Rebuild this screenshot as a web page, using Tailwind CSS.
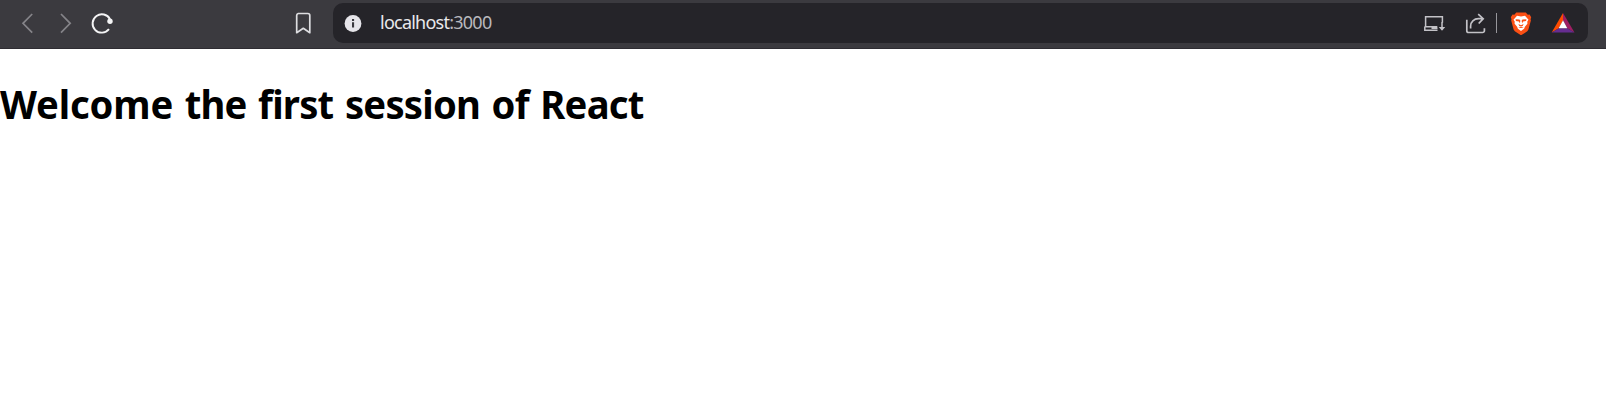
<!DOCTYPE html>
<html lang="en">
<head>
<meta charset="utf-8">
<title>localhost:3000</title>
<script src="https://cdn.jsdelivr.net/npm/@tailwindcss/browser@4"></script>
</head>
<body class="h-screen overflow-hidden bg-white font-['Noto_Sans',sans-serif]">
<header class="flex h-[49px] items-start border-b border-[#2e2c32] bg-[#3b3a3f] pt-[3px] pl-5 pr-[18px]">
  <nav class="flex h-10 w-[313px] shrink-0 items-center">
    <svg class="h-6 w-4" viewBox="0 0 16 24" fill="none" stroke="#858489" stroke-width="1.7"><path d="M12.2 3 3 12.3l9.200 9.400"/></svg>
    <svg class="ml-[22px] h-6 w-4" viewBox="0 0 16 24" fill="none" stroke="#858489" stroke-width="1.7"><path d="M3 3l9.200 9.300L3 21.700"/></svg>
    <svg class="ml-4 h-6 w-6" viewBox="0 0 24 24" fill="none" stroke="#f4f4f5" stroke-width="1.900"><path d="M20 8.300A9.200 9.200 0 1 0 19 18.200"/><circle cx="20" cy="10.300" r="2.700" fill="#f4f4f5" stroke="none"/></svg>
    <svg class="ml-[181px] h-6 w-4" viewBox="0 0 16 24" fill="none" stroke="#dddde0" stroke-width="1.700" stroke-linejoin="round"><path d="M3.200 2.500h9.600a2 2 0 0 1 2 2v17.200L8.300 17.300l-6.600 4.400V4.500a2 2 0 0 1 1.500-2z"/></svg>
  </nav>
  <div class="flex h-10 flex-1 items-center rounded-[10px] bg-[#252429] pl-[11px] pr-[13px]">
    <svg class="h-[18px] w-[18px]" viewBox="0 0 18 18"><circle cx="9" cy="9.500" r="8.400" fill="#e6e5ea"/><path d="M8 5h2.100v2H8zM8 8.200h2.100v5.300H8z" fill="#39383d"/></svg>
    <span class="ml-[18px] w-[111px] -translate-y-px whitespace-nowrap text-[18px] leading-6 tracking-[-0.76px] text-[#e9e9ec]">localhost<span class="text-[#b9b8bd]">:3000</span></span>
    <div class="ml-auto flex items-center">
      <svg class="h-6 w-6" viewBox="0 0 24 24" fill="none" stroke="#c3c2c7" stroke-width="1.500"><path d="M3.600 15.500V5.700h16.800v6M2.800 15.700h12.500M2.800 15.500v3.700h12.700M9.500 17.200h6M20 11v7.500"/><path d="M16.800 15.900h6.400L20 19.700z" fill="#c3c2c7" stroke="none"/></svg>
      <svg class="ml-[18px] h-6 w-6" viewBox="0 0 24 24" fill="none" stroke="#c3c2c7" stroke-width="1.700"><path d="M2.800 8.700v11a1.800 1.800 0 0 0 1.800 1.800h14a1.800 1.800 0 0 0 1.800-1.800v-2.500M6.600 17.500v-2.300c0-4.500 3.300-7.500 8-7.500h4.800M14.200 3.200l5 4.500-4.500 4.800"/></svg>
      <span class="ml-2 h-5 w-px bg-[#97969b]"></span>
      <svg class="ml-3 h-6 w-6" viewBox="0 0 24 24">
        <path d="M7.300 1.500h9.500l2 2.200 1.800-.3 1.600 2.800-.6 2 .3 1.200-2.500 9.200-1.100 1.700-6.300 4-6.200-4-1.200-1.700L2.200 9.400l.3-1.200-.7-2 1.700-2.800 1.800.3z" fill="#fa4f14"/>
        <path d="M8 4.800l4 .7 4-.7 3.500 4-1.200 1.800.1 2.200-2.500 3-.8 2-3.100 2.300-3.100-2.300-.8-2-2.500-3 .1-2.200L4.500 8.800z" fill="#fff"/>
        <path d="M6.600 8.300l3.900.3.900 1.200-.6 2.400-.9-1.700-3-.5zM17.400 8.300l-3.900.3-.9 1.200.6 2.400.9-1.700 3-.5zM9.400 13l2.600 1.200 2.600-1.200-.9 2h-3.400zM9.300 16.200l2.700-.6 2.700.6-2.700.9z" fill="#fa4f14"/>
      </svg>
      <svg class="ml-[18px] h-6 w-6" viewBox="0 0 24 24"><path d="M12 2v7.200L7.800 17.300.7 21.500z" fill="#ff4b00"/><path d="M12 2l11.500 19.500-7.300-4.200L12 9.200z" fill="#9e1f63"/><path d="M.7 21.500h22.800l-7.300-4.200H7.800z" fill="#662d91"/><path d="M12 9.200l4.300 8.100H7.700z" fill="#fff"/></svg>
    </div>
  </div>
</header>
<main class="pt-[27px]">
  <h1 class="w-max origin-left scale-x-[0.956] whitespace-nowrap text-[40px] font-bold leading-[56px] tracking-[-0.8px] text-black [font-variant-ligatures:none] [word-spacing:2.4px]"><span class="tracking-[-0.15px]">Welcome</span> the first session of React</h1>
</main>
</body>
</html>
